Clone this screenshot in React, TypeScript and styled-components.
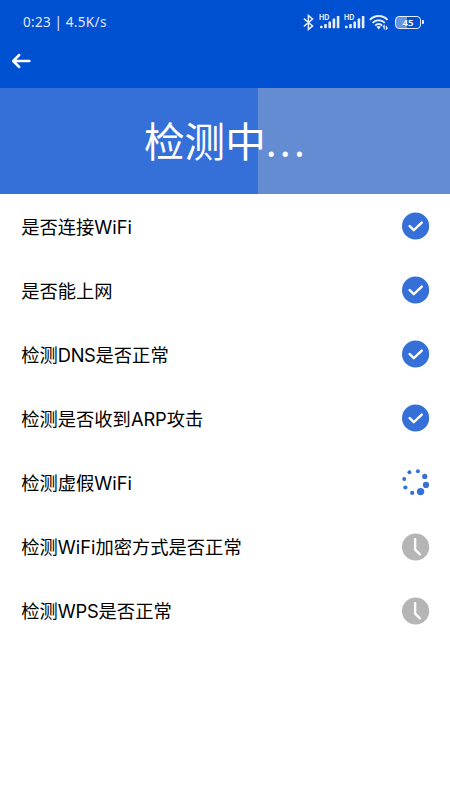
import styled, { createGlobalStyle } from "styled-components";

type Status = "done" | "loading" | "waiting";

type CheckItem = {
  parts: { text: string; latin?: boolean; spacing?: number }[];
  status: Status;
};

const items: CheckItem[] = [
  {
    parts: [{ text: "是否连接" }, { text: "WiFi", latin: true }],
    status: "done",
  },
  { parts: [{ text: "是否能上网" }], status: "done" },
  {
    parts: [
      { text: "检测" },
      { text: "DNS", latin: true, spacing: -0.3 },
      { text: "是否正常" },
    ],
    status: "done",
  },
  {
    parts: [
      { text: "检测是否收到" },
      { text: "ARP", latin: true, spacing: -0.1 },
      { text: "攻击" },
    ],
    status: "done",
  },
  {
    parts: [{ text: "检测虚假" }, { text: "WiFi", latin: true }],
    status: "loading",
  },
  {
    parts: [
      { text: "检测" },
      { text: "WiFi", latin: true },
      { text: "加密方式是否正常" },
    ],
    status: "waiting",
  },
  {
    parts: [
      { text: "检测" },
      { text: "WPS", latin: true, spacing: -0.2 },
      { text: "是否正常" },
    ],
    status: "waiting",
  },
];

const spinnerDots = [
  [14.9, 2.2, 2],
  [21.7, 7.4, 2.6],
  [23, 15.9, 3.1],
  [17.6, 22.6, 3.7],
  [9.2, 23.9, 2.1],
  [2.4, 18.5, 2.1],
  [1.2, 10, 2],
  [6.4, 3.3, 2],
];

function StatusIcon({ status }: { status: Status }) {
  if (status === "loading") {
    return (
      <svg width="28" height="28" viewBox="-1 0 28 28" fill="#3570d8">
        {spinnerDots.map(([cx, cy, r]) => (
          <circle key={`${cx}-${cy}`} cx={cx} cy={cy} r={r} />
        ))}
      </svg>
    );
  }
  return (
    <svg
      width="28"
      height="28"
      viewBox="0 0 28 28"
      fill="none"
      stroke="#fff"
      strokeLinecap="round"
      strokeLinejoin="round"
    >
      <circle
        cx="13.6"
        cy="14"
        r="13.6"
        fill={status === "done" ? "#3570d8" : "#b5b5b5"}
        stroke="none"
      />
      {status === "done" ? (
        <path d="M7.6 14 11.8 18.2 19.8 10.6" strokeWidth="2.4" />
      ) : (
        <path d="M13.1 6.2V16.7L17.9 21.3" strokeWidth="2.4" />
      )}
    </svg>
  );
}

function Bluetooth() {
  return (
    <svg width="11" height="17" viewBox="0 0 11 17" fill="none">
      <path
        d="M.9 4.7 9.6 11.9 5.4 15.5V1.5L9.6 5.1.9 12.3"
        stroke="#e6edfa"
        strokeWidth="1.5"
      />
    </svg>
  );
}

function Signal() {
  return (
    <SignalBox>
      <HdLabel>HD</HdLabel>
      <svg width="21" height="14" viewBox="0 0 21 14" fill="#e6edfa">
        <rect x="1" y="10.8" width="2.6" height="2.4" rx=".6" />
        <rect x="5.2" y="9" width="2.6" height="4.2" rx=".6" />
        <rect x="9.4" y="6.5" width="2.6" height="6.7" rx=".6" />
        <rect x="13.6" y="3.6" width="2.6" height="9.6" rx=".6" />
        <rect x="17.8" y="1" width="2.6" height="12.2" rx=".6" />
      </svg>
    </SignalBox>
  );
}

function Wifi() {
  return (
    <svg width="20" height="16" viewBox="0 0 20 16" fill="none">
      <g stroke="#e6edfa" strokeWidth="2">
        <path d="M.9 5.9C5.7.7 13.7.7 18.5 5.9" />
        <path d="M3.6 8.9C7 5.3 12.4 5.3 15.8 8.9" />
        <path d="M6.2 11.6C8.2 9.6 11.2 9.6 13.2 11.6" />
      </g>
      <path d="M7.5 12.8Q9.7 11.4 11.9 12.8L9.7 15.4Z" fill="#e6edfa" />
      <path
        d="M13.8 13.2 15.2 11.7V15.4M18.8 13.7 17.3 15.3V11.7"
        stroke="#e6edfa"
        strokeWidth="1.1"
      />
    </svg>
  );
}

export default function App() {
  return (
    <>
      <GlobalStyle />
      <Screen>
        <Header>
          <StatusBar>
            <Clock>0:23 | 4.5K/s</Clock>
            <StatusIcons>
              <Bluetooth />
              <Signal />
              <Signal />
              <Wifi />
              <Battery>
                <BatteryBody>45</BatteryBody>
                <BatteryCap />
              </Battery>
            </StatusIcons>
          </StatusBar>
          <BackButton aria-label="返回">
            <svg
              width="20"
              height="16"
              viewBox="0 0 20 16"
              fill="none"
              stroke="#fff"
              strokeWidth="2.5"
              strokeLinecap="round"
              strokeLinejoin="round"
            >
              <path d="M8.2 2 2.2 8 8.2 14M2.5 8H18.4" />
            </svg>
          </BackButton>
        </Header>
        <Progress $percent={57.25}>
          <Title>
            检测中<Dots>...</Dots>
          </Title>
        </Progress>
        <List>
          {items.map((item) => (
            <Row key={item.parts.map((part) => part.text).join("")}>
              <Label>
                {item.parts.map((part) =>
                  part.latin ? (
                    <Latin key={part.text} $spacing={part.spacing ?? 0}>
                      {part.text}
                    </Latin>
                  ) : (
                    part.text
                  )
                )}
              </Label>
              <StatusIcon status={item.status} />
            </Row>
          ))}
        </List>
      </Screen>
    </>
  );
}

const GlobalStyle = createGlobalStyle`
  body {
    margin: 0;
    background: #fff;
  }

  svg {
    display: block;
    flex-shrink: 0;
  }
`;

const Screen = styled.div`
  width: 450px;
  height: 800px;
  overflow: hidden;
  background: #fff;
  font-family: "Noto Sans CJK SC", sans-serif;
`;

const Header = styled.header`
  height: 88px;
  background: #0050d2;
`;

const StatusBar = styled.div`
  display: flex;
  align-items: center;
  justify-content: space-between;
  height: 44px;
  padding: 0 26px 0 23px;
  box-sizing: border-box;
`;

const Clock = styled.span`
  color: #e0e9f9;
  font-family: "Noto Sans", sans-serif;
  font-size: 13.5px;
  line-height: 44px;
  letter-spacing: 0.35px;
  word-spacing: -0.5px;
  white-space: pre;
`;

const StatusIcons = styled.div`
  display: flex;
  align-items: center;
  gap: 5px;
`;

const SignalBox = styled.div`
  position: relative;
  margin-right: -1px;
`;

const HdLabel = styled.span`
  position: absolute;
  top: -1px;
  left: 0;
  color: #e6edfa;
  font: 700 7px/8px Inter, sans-serif;
`;

const Battery = styled.div`
  display: flex;
  align-items: center;
  gap: 1px;
  margin-left: 1px;
`;

const BatteryBody = styled.div`
  width: 26px;
  height: 13px;
  border: 1.5px solid #e6edfa;
  border-radius: 4px;
  box-sizing: border-box;
  background: linear-gradient(90deg, #6594e3 45%, transparent 45%);
  color: #fff;
  font: 600 9.5px/11px "Noto Sans", sans-serif;
  text-align: center;
`;

const BatteryCap = styled.div`
  width: 2px;
  height: 4px;
  border-radius: 0 1px 1px 0;
  background: #e6edfa;
`;

const BackButton = styled.button`
  display: block;
  margin: 9px 0 0 11px;
  padding: 0;
  border: 0;
  background: none;
`;

const Progress = styled.div<{ $percent: number }>`
  display: flex;
  justify-content: center;
  height: 106px;
  background: linear-gradient(
    90deg,
    #3570d8 ${({ $percent }) => $percent}%,
    #648cd3 ${({ $percent }) => $percent}%
  );
`;

const Title = styled.h1`
  margin: 0;
  padding-left: 2px;
  color: #fff;
  font-size: 40.6px;
  font-weight: 400;
  line-height: 103px;
`;

const Dots = styled.span`
  font-family: "Noto Sans", sans-serif;
  letter-spacing: 3.2px;
`;

const List = styled.ul`
  margin: 0;
  padding: 0;
  list-style: none;
`;

const Row = styled.li`
  display: flex;
  align-items: center;
  justify-content: space-between;
  height: 64.15px;
  padding: 0 20px 0 21.2px;
`;

const Label = styled.span`
  color: #000;
  font-size: 18.3px;
  line-height: 26px;
  white-space: nowrap;
`;

const Latin = styled.span<{ $spacing: number }>`
  font-family: Inter, sans-serif;
  letter-spacing: ${({ $spacing }) => $spacing}px;
`;
